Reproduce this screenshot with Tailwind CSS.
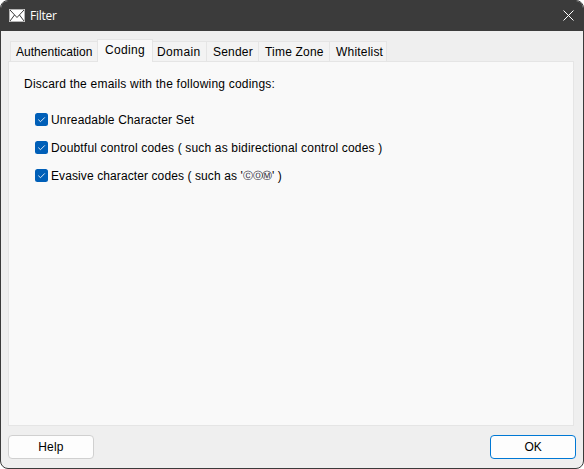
<!DOCTYPE html>
<html lang="en">
<head>
<meta charset="utf-8">
<title>Filter</title>
<script src="https://cdn.jsdelivr.net/npm/@tailwindcss/browser@4"></script>
</head>
<body class="bg-white">
<div class="w-[584px] h-[469px] rounded-[8px] border border-[#3b3b3b] bg-[#efefef] overflow-hidden flex flex-col font-['Liberation_Sans',sans-serif] text-[12px] leading-[14px] text-black whitespace-nowrap">
  <header class="h-[30px] shrink-0 bg-[#3b3b3b] flex items-center pl-2 pr-[9px]">
    <svg class="-mt-px w-4 h-[13px] shrink-0" viewBox="0 0 16 13"><rect width="16" height="13" fill="#fff"/><path d="M1 1L8 8.5L15 1M1 12L5.5 6M15 12L10.5 6" fill="none" stroke="#3b3b3b" stroke-width="1"/><path d="M.5 .5H15.5V12.5H.5Z" fill="none" stroke="#b5b5b5"/></svg>
    <h1 class="ml-[5px] text-white font-['Open_Sans',sans-serif] text-[12px] leading-[16px] tracking-[-0.25px]">Filter</h1>
    <svg class="ml-auto -mt-px w-[11px] h-[11px]" viewBox="0 0 11 11"><path d="M.5 .5L10.5 10.5M10.5 .5L.5 10.5" stroke="#fff" stroke-width="1"/></svg>
  </header>
  <nav class="mt-2 h-[23px] pl-[9px] flex items-end shrink-0 relative z-10">
    <div class="w-[87px] h-[21px] border border-r-0 border-[#e5e5e5] bg-[#f3f3f3] pl-[5px] pt-[3px] tracking-[0.02px]">Authentication</div>
    <div class="w-[56px] h-[23px] border border-b-0 border-[#e5e5e5] bg-[#f9f9f9] pl-[7px] pt-[3px] tracking-[0.35px]">Coding</div>
    <div class="w-[54px] h-[21px] border-y border-r border-[#e5e5e5] bg-[#f3f3f3] pl-[4px] pt-[3px] tracking-[0.35px]">Domain</div>
    <div class="w-[52px] h-[21px] border-y border-r border-[#e5e5e5] bg-[#f3f3f3] pl-[6px] pt-[3px] tracking-[0.2px]">Sender</div>
    <div class="w-[71px] h-[21px] border-y border-r border-[#e5e5e5] bg-[#f3f3f3] pl-[6px] pt-[3px] tracking-[0.2px]">Time Zone</div>
    <div class="w-[57px] h-[21px] border-y border-r border-[#e5e5e5] bg-[#f3f3f3] pl-[6px] pt-[3px] tracking-[0.2px]">Whitelist</div>
  </nav>
  <main class="-mt-px ml-[7px] w-[566px] h-[365px] shrink-0 border border-[#e5e5e5] bg-[#f9f9f9] pl-[15px] pt-[15px] tracking-[0.21px]">
    <p>Discard the emails with the following codings:</p>
    <div class="mt-[21px] ml-[11px] flex flex-col gap-[14px]">
      <label class="h-[14px] flex items-center gap-[3px]"><svg class="w-[13px] h-[13px] shrink-0" viewBox="0 0 13 13"><rect width="13" height="13" rx="2.5" fill="#005fb8"/><path d="M3.3 6.6L5.5 8.7L9.8 4.4" fill="none" stroke="#d9e7f4" stroke-width="1"/></svg><span class="pt-[2px] tracking-[0.16px]">Unreadable Character Set</span></label>
      <label class="h-[14px] flex items-center gap-[3px]"><svg class="w-[13px] h-[13px] shrink-0" viewBox="0 0 13 13"><rect width="13" height="13" rx="2.5" fill="#005fb8"/><path d="M3.3 6.6L5.5 8.7L9.8 4.4" fill="none" stroke="#d9e7f4" stroke-width="1"/></svg><span class="pt-[2px] tracking-[0.17px]">Doubtful control codes ( such as bidirectional control codes )</span></label>
      <label class="h-[14px] flex items-center gap-[3px]"><svg class="w-[13px] h-[13px] shrink-0" viewBox="0 0 13 13"><rect width="13" height="13" rx="2.5" fill="#005fb8"/><path d="M3.3 6.6L5.5 8.7L9.8 4.4" fill="none" stroke="#d9e7f4" stroke-width="1"/></svg><span class="pt-[2px] tracking-[0.1px]">Evasive character codes ( such as '<span class="font-['DejaVu_Sans',sans-serif] text-[10px] leading-none tracking-[-0.3px] align-[1px] text-[#20202c]">ⒸⓄⓂ</span>' )</span></label>
    </div>
  </main>
  <footer class="mt-[9px] mx-[7px] flex justify-between shrink-0 tracking-[0.2px]">
    <button class="w-[86px] h-[24px] rounded-[4px] border border-[#d0d0d0] bg-[#fdfdfd]">Help</button>
    <button class="w-[86px] h-[24px] rounded-[4px] border border-[#0078d4] bg-[#fdfdfd] tracking-[-0.2px]">OK</button>
  </footer>
</div>
</body>
</html>
